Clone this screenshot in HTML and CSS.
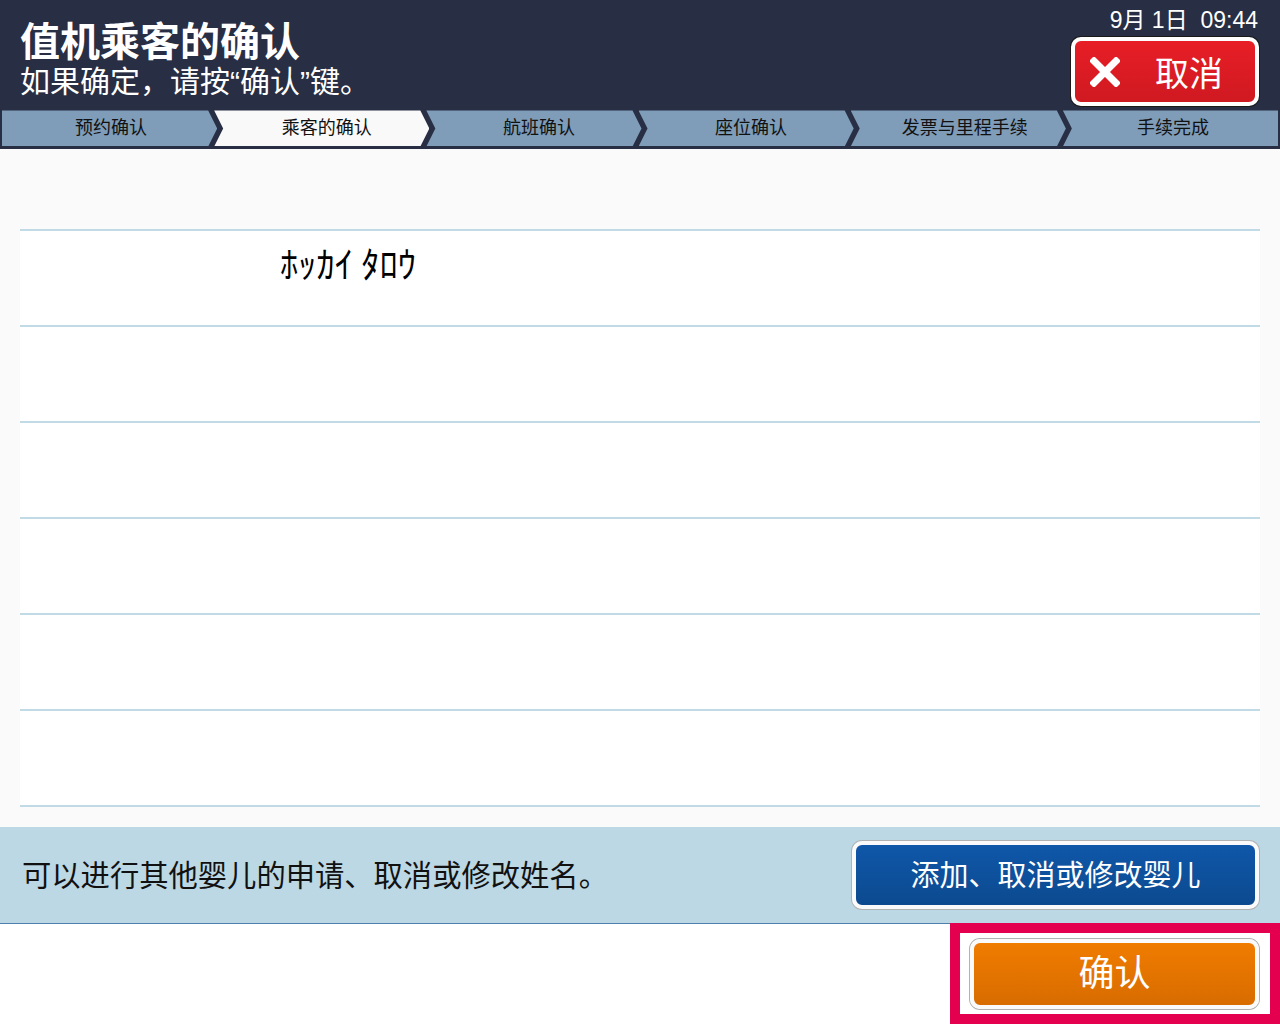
FILE: index.html
```html
<!DOCTYPE html>
<html lang="zh-CN">
<head>
<meta charset="utf-8">
<title>值机乘客的确认</title>
<link rel="stylesheet" href="styles.css">
</head>
<body>
<div class="screen">
  <header class="header">
    <div class="titles">
      <h1 class="title">值机乘客的确认</h1>
      <p class="subtitle">如果确定，请按“确认”键。</p>
    </div>
    <div class="header-right">
      <div class="clock">9月 1日&nbsp;&nbsp;09:44</div>
      <button class="btn-cancel">
        <svg class="x-icon" width="30" height="30" viewBox="0 0 30 30"><path d="M4 4 L26 26 M26 4 L4 26" stroke="#fff" stroke-width="7" stroke-linecap="square"/></svg>
        <span class="cancel-label">取消</span>
      </button>
    </div>
  </header>
  <nav class="steps">
    <div class="step first">预约确认</div>
    <div class="step active">乘客的确认</div>
    <div class="step">航班确认</div>
    <div class="step">座位确认</div>
    <div class="step">发票与里程手续</div>
    <div class="step last">手续完成</div>
  </nav>
  <main class="content">
    <div class="list">
      <div class="row"><span class="name">ﾎｯｶｲ ﾀﾛｳ</span></div>
      <div class="row"></div>
      <div class="row"></div>
      <div class="row"></div>
      <div class="row"></div>
      <div class="row"></div>
    </div>
  </main>
  <section class="info">
    <p class="info-text">可以进行其他婴儿的申请、取消或修改姓名。</p>
    <button class="btn btn-blue">添加、取消或修改婴儿</button>
  </section>
  <footer class="footer">
    <div class="highlight">
      <button class="btn btn-orange">确认</button>
    </div>
  </footer>
</div>
</body>
</html>
```

FILE: styles.css
```css
* { box-sizing: border-box; }
html, body {
  margin: 0;
  padding: 0;
  background: #ffffff;
}
body {
  font-family: "Noto Sans CJK SC", "Noto Sans", sans-serif;
  color: #111;
}
.screen {
  width: 1280px;
  height: 1024px;
  overflow: hidden;
  display: flex;
  flex-direction: column;
}
.header {
  background: #282e43;
  height: 111px;
  display: flex;
  justify-content: space-between;
  padding: 0 21px 0 20px;
}
.titles { display: flex; flex-direction: column; }
.title {
  margin: 16px 0 0 0;
  font-size: 40px;
  line-height: 46px;
  font-weight: 700;
  color: #fff;
}
.subtitle {
  margin: 0;
  font-family: "Liberation Sans", "Noto Sans CJK SC", sans-serif;
  font-size: 30px;
  line-height: 40px;
  color: #fff;
}
.header-right {
  display: flex;
  flex-direction: column;
  align-items: flex-end;
}
.clock {
  margin-top: 6px;
  font-family: "Liberation Sans", "Noto Sans CJK SC", sans-serif;
  font-size: 23px;
  line-height: 28px;
  color: #fff;
  padding-right: 1px;
}
.btn-cancel {
  margin-top: 3px;
  width: 188px;
  height: 69px;
  border: 4px solid #fff;
  border-radius: 10px;
  box-shadow: 0 0 0 1px #1a1a1a;
  background: linear-gradient(#e81e26, #cf1921);
  display: flex;
  align-items: center;
  padding: 0 0 0 15px;
  cursor: pointer;
}
.x-icon { flex: none; }
.cancel-label {
  margin-left: 35px;
  font-family: "Noto Sans CJK SC", sans-serif;
  font-size: 34px;
  line-height: 40px;
  color: #fff;
}
.steps {
  display: flex;
  height: 39px;
  background: #282e43;
  padding: 0 2px 3px 2px;
}
.step {
  flex: 1 1 0;
  min-width: 0;
  height: 36px;
  margin-left: -3px;
  padding: 0;
  background: #7f9cb8;
  font-size: 18px;
  line-height: 33px;
  text-align: center;
  text-indent: 10px;
  white-space: nowrap;
  color: #111;
  clip-path: polygon(0 0, calc(100% - 9px) 0, 100% 50%, calc(100% - 9px) 100%, 0 100%, 9px 50%);
}
.step:nth-child(5) { text-indent: 13px; }
.step.first {
  margin-left: 0;
  text-indent: 3px;
  clip-path: polygon(0 0, calc(100% - 9px) 0, 100% 50%, calc(100% - 9px) 100%, 0 100%);
}
.step.last {
  text-indent: 5px;
  clip-path: polygon(0 0, 100% 0, 100% 100%, 0 100%, 9px 50%);
}
.step.active { background: #f9f9f9; }
.content {
  background: #fafafa;
  height: 678px;
  padding: 80px 20px 20px 20px;
}
.list {
  border-bottom: 2px solid #c2dae6;
}
.row {
  height: 96px;
  border-top: 2px solid #c2dae6;
  background: #fff;
  padding: 12px 0 0 260px;
}
.name {
  font-family: "Noto Sans CJK JP", sans-serif;
  font-size: 36.5px;
  line-height: 40px;
  color: #000;
}
.info {
  background: #bcd8e4;
  height: 97px;
  border-bottom: 1px solid #4d80ad;
  display: flex;
  align-items: center;
  justify-content: space-between;
  padding: 0 21px 1px 22px;
}
.info-text {
  margin: 0;
  font-size: 29.3px;
  line-height: 40px;
  color: #111;
  padding-bottom: 3px;
}
.btn {
  font-family: "Noto Sans CJK SC", sans-serif;
  color: #fff;
  border: 4px solid #fafafa;
  border-radius: 10px;
  box-shadow: 0 0 0 1px #b2b2b2;
  cursor: pointer;
  padding: 0;
}
.btn-blue {
  width: 407px;
  height: 68px;
  background: linear-gradient(#0f57a9, #0c4a8f);
  font-size: 29px;
  line-height: 40px;
  padding-bottom: 4px;
}
.footer {
  flex: 1;
  display: flex;
  justify-content: flex-end;
}
.highlight {
  position: relative;
  margin-top: -1px;
  width: 330px;
  height: 101px;
  border: 10px solid #e4004f;
  background: #fff;
  padding: 6px 11px 0 10px;
}
.btn-orange {
  width: 289px;
  height: 70px;
  background: linear-gradient(#f07c00, #d86c00);
  font-size: 36px;
  line-height: 40px;
  padding-bottom: 8px;
}
```
